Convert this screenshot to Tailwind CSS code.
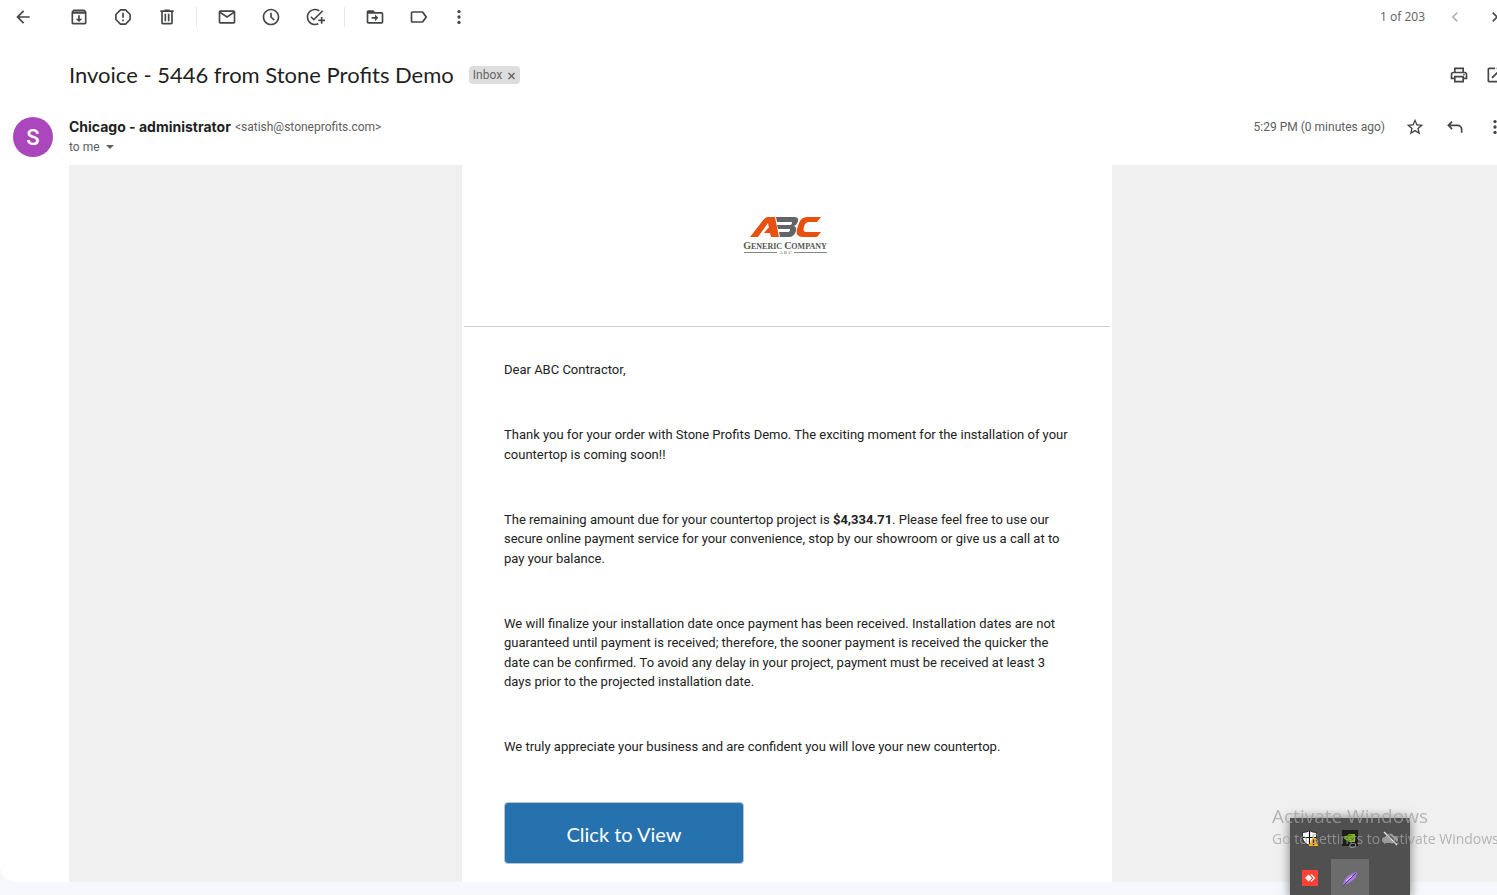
<!DOCTYPE html>
<html lang="en">
<head>
<meta charset="utf-8">
<meta name="viewport" content="width=device-width, initial-scale=1">
<title>Invoice - 5446 from Stone Profits Demo</title>
<script src="https://cdn.jsdelivr.net/npm/@tailwindcss/browser@4"></script>
</head>
<body class="flex h-screen flex-col overflow-hidden bg-[#f6f8fc] font-['Roboto',sans-serif] text-[#444746]">
<main class="min-h-0 flex-1 overflow-hidden rounded-bl-2xl bg-white">

  <!-- Toolbar -->
  <div class="-mr-2 flex h-[34px] items-center justify-between pl-[13px]">
    <div class="flex items-center gap-6">
      <button aria-label="Back" class="mr-3 size-5"><svg viewBox="0 0 24 24" fill="currentColor"><path d="M20 11H7.83l5.59-5.59L12 4l-8 8 8 8 1.41-1.41L7.83 13H20z"/></svg></button>
      <button aria-label="Archive" class="size-5"><svg viewBox="0 0 24 24" fill="currentColor"><path d="m20.54 5.23-1.39-1.68C18.88 3.21 18.47 3 18 3H6c-.47 0-.88.21-1.16.55L3.46 5.23C3.17 5.57 3 6.02 3 6.5V19c0 1.1.9 2 2 2h14c1.1 0 2-.9 2-2V6.5c0-.48-.17-.93-.46-1.27zM19 19H5V8h14zM11 10v4H8l4 4 4-4h-3v-4z"/><path fill="#fff" fill-opacity=".5" d="M6.200 5h11.600l.8 1H5.400z"/></svg></button>
      <button aria-label="Report spam" class="size-5"><svg viewBox="0 0 24 24" fill="none" stroke="currentColor" stroke-width="2"><path d="M9 3.500h6L20.500 9v6L15 20.500H9L3.500 15V9z" stroke-linejoin="round"/><path d="M12 7v6m0 2v2"/></svg></button>
      <button aria-label="Delete" class="size-5"><svg viewBox="0 0 24 24" fill="currentColor"><path d="M15 4V3H9v1H4v2h1v13c0 1.100.9 2 2 2h10c1.100 0 2-.9 2-2V6h1V4zm2 15H7V6h10zM9 8h2v9H9zm4 0h2v9h-2z"/></svg></button>
      <span class="-mr-1 -ml-[5px] h-5 w-px bg-[#e3e8ef]"></span>
      <button aria-label="Mark as unread" class="size-5"><svg viewBox="0 0 24 24" fill="currentColor"><path d="M20 4H4c-1.100 0-2 .9-2 2v12c0 1.100.9 2 2 2h16c1.100 0 2-.9 2-2V6c0-1.100-.9-2-2-2zm-.800 2L12 10.800 4.800 6zM4 18V7.870l8 5.330 8-5.330V18z"/></svg></button>
      <button aria-label="Snooze" class="size-5"><svg viewBox="0 0 24 24" fill="currentColor"><path d="M12 2C6.500 2 2 6.500 2 12s4.500 10 10 10 10-4.500 10-10S17.500 2 12 2zm0 18c-4.410 0-8-3.590-8-8s3.590-8 8-8 8 3.590 8 8-3.590 8-8 8zM13 7h-2v5.400l4.200 4.200 1.400-1.400-3.600-3.600z"/></svg></button>
      <button aria-label="Add to Tasks" class="size-5"><svg viewBox="0 0 24 24" fill="currentColor"><path d="M22 5.180 10.590 16.600l-4.240-4.240 1.410-1.410 2.830 2.830 10-10zM12 20c-4.410 0-8-3.590-8-8s3.590-8 8-8c1.570 0 3.040.46 4.280 1.250l1.450-1.450C16.100 2.670 14.130 2 12 2 6.480 2 2 6.480 2 12s4.480 10 10 10c1.730 0 3.360-.44 4.780-1.220l-1.500-1.500c-1 .46-2.110.72-3.280.72zm7-5h-3v2h3v3h2v-3h3v-2h-3v-3h-2z"/></svg></button>
      <span class="-mr-1 -ml-[5px] h-5 w-px bg-[#e3e8ef]"></span>
      <button aria-label="Move to" class="size-5"><svg viewBox="0 0 24 24" fill="currentColor"><path d="M20 6h-8l-2-2H4c-1.100 0-2 .9-2 2v12c0 1.100.9 2 2 2h16c1.100 0 2-.9 2-2V8c0-1.100-.9-2-2-2zm0 12H4V8h16zm-8-1 4-4-4-4v3H8v2h4z"/></svg></button>
      <button aria-label="Labels" class="size-5"><svg viewBox="0 0 24 24" fill="currentColor"><path d="M16 5H4c-1.100 0-2 .9-2 2v10c0 1.100.9 2 2 2h12c.55 0 1-.2 1.400-.6L22 12l-4.600-6.400C17 5.200 16.550 5 16 5zm-.400 12H4V7h11.600l3.800 5z"/></svg></button>
      <button aria-label="More" class="-ml-1 size-5"><svg viewBox="0 0 24 24" fill="currentColor"><circle cx="12" cy="5.500" r="2"/><circle cx="12" cy="12" r="2"/><circle cx="12" cy="18.500" r="2"/></svg></button>
    </div>
    <div class="flex items-center gap-5">
      <span class="text-xs text-[#5e6063] font-['Open_Sans',sans-serif]">1 of 203</span>
      <button aria-label="Newer" class="size-5 text-[#b4b5b6]" disabled><svg viewBox="0 0 24 24" fill="currentColor"><path d="M15.410 7.410 14 6l-6 6 6 6 1.410-1.410L10.830 12z"/></svg></button>
      <button aria-label="Older" class="size-5"><svg viewBox="0 0 24 24" fill="currentColor"><path d="M8.590 16.590 13.170 12 8.590 7.410 10 6l6 6-6 6z"/></svg></button>
    </div>
  </div>

  <!-- Subject -->
  <div class="-mr-2 flex h-[82px] items-center justify-between pl-[69px]">
    <div class="flex items-center gap-[15px]">
      <h1 class="text-[22px] leading-7 text-[#1f1f1f] font-['Lato',sans-serif]">Invoice - 5446 from Stone Profits Demo</h1>
      <span class="flex h-[18px] items-center gap-[5px] rounded bg-[#ddd] px-1 text-xs text-[#666]">Inbox
        <button aria-label="Remove label Inbox" class="size-[9px]"><svg viewBox="0 0 9 9" fill="none" stroke="currentColor" stroke-width="1.500"><path d="M1.500 2l6 6m0-6-6 6"/></svg></button>
      </span>
    </div>
    <div class="flex items-center gap-4">
      <button aria-label="Print" class="size-5"><svg viewBox="0 0 24 24" fill="currentColor"><path d="M19 8h-1V3H6v5H5c-1.660 0-3 1.340-3 3v6h4v4h12v-4h4v-6c0-1.660-1.340-3-3-3zM8 5h8v3H8zm8 12v2H8v-4h8zm2-2v-2H6v2H4v-4c0-.55.45-1 1-1h14c.55 0 1 .45 1 1v4z"/><circle cx="18" cy="11.500" r="1"/></svg></button>
      <button aria-label="Open in new window" class="size-5"><svg viewBox="0 0 24 24" fill="currentColor"><path d="M19 19H5V5h7V3H5c-1.100 0-2 .9-2 2v14c0 1.100.9 2 2 2h14c1.100 0 2-.9 2-2v-7h-2zM14 3v2h3.590l-9.830 9.830 1.410 1.410L19 6.410V10h2V3z"/></svg></button>
    </div>
  </div>

  <!-- Sender -->
  <div class="-mr-2 flex h-[49px] items-start pl-[13px]">
    <div class="mt-px flex size-10 shrink-0 items-center justify-center rounded-full bg-[#ab47bc] text-[22px] font-medium text-white">S</div>
    <div class="ml-4 flex-1 text-xs text-[#5e5e5e]">
      <div class="flex h-[22px] items-center gap-1">
        <span class="text-sm font-bold text-[#1f1f1f] font-['Inter',sans-serif]">Chicago - administrator</span>
        <span>&lt;satish@stoneprofits.com&gt;</span>
      </div>
      <button class="flex h-[18px] items-center gap-[6px]">to me
        <svg class="w-2" viewBox="0 0 8 4" fill="currentColor"><path d="M0 0h8L4 4z"/></svg>
      </button>
    </div>
    <div class="flex h-[22px] items-center gap-5 text-xs text-[#5e5e5e]">
      <span>5:29 PM (0 minutes ago)</span>
      <button aria-label="Star" class="size-5 text-[#444746]"><svg viewBox="0 0 24 24" fill="currentColor"><path d="m22 9.240-7.190-.62L12 2 9.190 8.630 2 9.240l5.460 4.730L5.820 21 12 17.270 18.180 21l-1.630-7.030zM12 15.400l-3.760 2.270 1-4.280-3.320-2.880 4.380-.38L12 6.100l1.710 4.040 4.380.38-3.320 2.880 1 4.280z"/></svg></button>
      <button aria-label="Reply" class="size-5 text-[#444746]"><svg viewBox="0 0 24 24" fill="none" stroke="currentColor" stroke-width="2"><path d="M8.500 5.500 4 10l4.500 4.500M4 10h11a5 5 0 0 1 5 5v4"/></svg></button>
      <button aria-label="More message options" class="size-5 text-[#444746]"><svg viewBox="0 0 24 24" fill="currentColor"><circle cx="12" cy="5.500" r="2"/><circle cx="12" cy="12" r="2"/><circle cx="12" cy="18.500" r="2"/></svg></button>
    </div>
  </div>

  <!-- Message body -->
  <div class="-mr-2 ml-[69px] flex min-h-full justify-center bg-[#f0f0f0]">
    <article class="w-[650px] bg-white px-[2px]">
      <header class="flex h-[162px] justify-center border-b border-[#ccc] pt-[50px]">
        <svg class="h-[42px] w-[90px]" viewBox="0 0 90 42" role="img" aria-label="ABC Generic Company">
          <path fill="#e8500f" fill-rule="evenodd" d="M8 22 22 4q2-2 4-2h7l4 20h-8l-1-4h-6l4-5h1l-1-5-10 14z"/>
          <path fill="#636466" d="M34 2h18q5 0 4 4-1 4-4 5 3 1 2 5-2 6-7 6H38l-1-5h9q2 0 2-3H36l-1-4h13q2 0 2-3H35z"/>
          <path fill="#e8500f" d="M79 2H65q-6 0-8 6l-2 6q-2 8 6 8h14l4-5H65q-5 0-3-5 1-5 5-5h8z"/>
          <text x="43" y="34" text-anchor="middle" font-family="Liberation Serif, serif" font-weight="bold" fill="#555"><tspan font-size="10">G</tspan><tspan font-size="8">ENERIC </tspan><tspan font-size="10">C</tspan><tspan font-size="8">OMPANY</tspan></text>
          <path stroke="#888" stroke-width="1" d="M2 37.500h33M52 37.500h33"/>
          <text x="43.500" y="39" text-anchor="middle" font-family="Liberation Serif, serif" font-size="5" fill="#666">A B C</text>
        </svg>
      </header>
      <div class="flex flex-col gap-[13px] px-10 pt-[33px] text-[13px] leading-normal text-[#222]">
        <p>Dear ABC Contractor,</p>
        <p><br></p>
        <p>Thank you for your order with Stone Profits Demo. The exciting moment for the installation of your countertop is coming soon!!</p>
        <p><br></p>
        <p>The remaining amount due for your countertop project is <b>$4,334.71</b>. Please feel free to use our secure online payment service for your convenience, stop by our showroom or give us a call at to pay your balance.</p>
        <p><br></p>
        <p>We will finalize your installation date once payment has been received. Installation dates are not guaranteed until payment is received; therefore, the sooner payment is received the quicker the date can be confirmed. To avoid any delay in your project, payment must be received at least 3 days prior to the projected installation date.</p>
        <p><br></p>
        <p>We truly appreciate your business and are confident you will love your new countertop.</p>
        <p><br></p>
        <a href="#" class="flex h-[62px] w-60 items-center justify-center rounded border border-[#b9c4cc] bg-[#2672ae] pt-px text-xl text-white font-['Lato',sans-serif]">Click to View</a>
      </div>
    </article>
  </div>
</main>
<div class="h-[13px] shrink-0"></div>

<!-- System tray flyout -->
<div class="fixed top-[818px] left-[1290px] grid h-20 w-[120px] grid-cols-3 grid-rows-2 bg-[#505050] shadow-[0_0_10px_rgba(0,0,0,0.5)]">
  <div class="flex items-center justify-center"><svg class="size-4" viewBox="0 0 16 16"><path d="M7.500 .5Q10 2.500 14.500 2.500V7q0 5.500-7 8.500Q.5 12.500.5 7V2.500q4.500 0 7-2z" fill="#fff" stroke="#111" stroke-width=".8"/><path d="M7.500 1v14M1 7.500h13.500" stroke="#111" stroke-width="1.200"/><path d="M11.500 6 16.500 16h-10z" fill="#fbb11b"/><path d="M11.500 9.500V13m0 1v1.200" stroke="#222" stroke-width="1.300"/></svg></div>
  <div class="flex items-center justify-center"><svg class="size-4" viewBox="0 0 16 16"><path fill="#1b1d18" d="M0 0h16v16H0z"/><path fill="#76b900" d="M6.500 4H13v8H6.500z"/><path fill="#1b1d18" d="M6.500 5q3.500 0 5.500 3-2 3-5.500 3z"/><path d="M2.500 8q4-4 8.500 0-4.500 4-8.500 0z" fill="none" stroke="#76b900" stroke-width="1.200"/><circle cx="7" cy="8" r="1.300" fill="#76b900"/></svg></div>
  <div class="flex items-center justify-center"><svg class="size-4" viewBox="0 0 16 16"><path d="M3 13a3 3 0 0 1 0-6 5 5 0 0 1 9-1 3.500 3.500 0 0 1 1 7z" fill="#9b9b9b"/><path d="m2.500 1.500 13 13" stroke="#505050" stroke-width="3"/><path d="m2 2 13 13" stroke="#eee" stroke-width="1.200"/></svg></div>
  <div class="flex items-center justify-center"><svg class="size-4" viewBox="0 0 16 16"><path fill="#ff4135" d="M0 0h16v16H0z"/><path fill="#fff" d="m6.500 4.500 3.500 3.500-3.500 3.500L3 8z"/><path d="m9 4.500 3.500 3.500L9 11.500" fill="none" stroke="#fff" stroke-width="1.300"/></svg></div>
  <div class="mx-px mt-px flex items-center justify-center bg-[#6c6c6c]"><svg class="size-4" viewBox="0 0 16 16"><path d="M1 15Q1 9 6 5q4-3 9-4 0 5-4 8-4 4-9 5z" fill="#a77be0"/><path d="M1 15 14 2" stroke="#5c2f9c"/><path d="m4 10 6-5" stroke="#e4d2ff"/></svg></div>
</div>

<!-- Activation watermark -->
<div class="pointer-events-none fixed top-[804px] left-[1272px] whitespace-nowrap text-[#a0a0a0]/75 font-['Open_Sans',sans-serif]">
  <p class="text-[19px] leading-6">Activate Windows</p>
  <p class="text-sm leading-[22px]">Go to Settings to Activate Windows.</p>
</div>
</body>
</html>
